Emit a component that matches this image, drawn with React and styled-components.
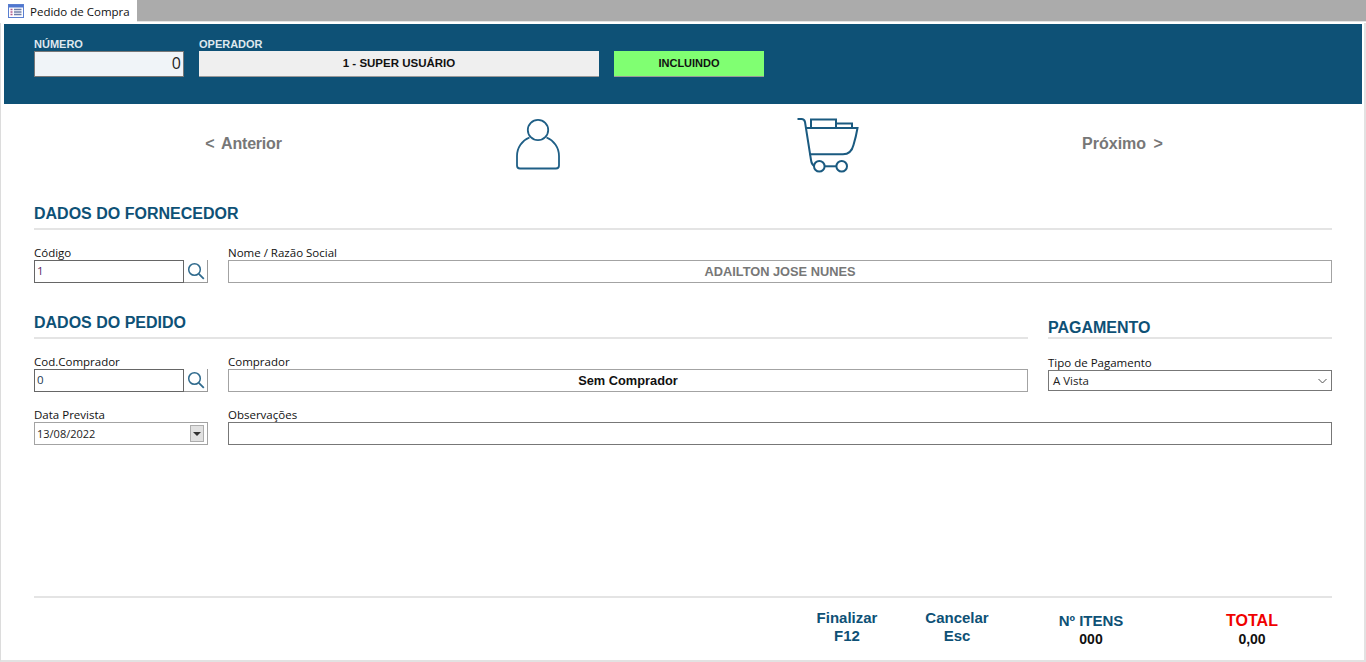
import React from "react";
import styled, { createGlobalStyle } from "styled-components";

const Blue = "#0e5176";

const GlobalStyle = createGlobalStyle`
  html, body {
    margin: 0;
    padding: 0;
    background: #fff;
    overflow: hidden;
  }
  * { box-sizing: border-box; }
`;

const Page = styled.div`
  width: 1366px;
  height: 662px;
  display: flex;
  flex-direction: column;
  background: #fff;
  font-family: "Liberation Sans", Arial, sans-serif;
`;

const TabBar = styled.div`
  height: 22px;
  flex: none;
  background: #ababab;
  border-bottom: 1px solid #e4e4e4;
`;

const Tab = styled.div`
  width: 137px;
  height: 22px;
  background: #fff;
  display: flex;
  align-items: center;
  padding-left: 8px;
  gap: 6px;
  font-family: "Open Sans", sans-serif;
  font-size: 11.5px;
  color: #111;
`;

const Window = styled.div`
  flex: 1;
  display: flex;
  flex-direction: column;
  margin-top: 1px;
  padding: 1px 2px 2px 3px;
  border-left: 1px solid #dcdcdc;
  border-right: 2px solid #e2e2e2;
  border-bottom: 2px solid #e2e2e2;
  min-height: 0;
`;

const Header = styled.div`
  height: 80px;
  flex: none;
  background: ${Blue};
  padding: 13px 30px 0;
  display: flex;
  align-items: flex-start;
  gap: 15px;
`;

const HeaderField = styled.div`
  width: ${(p) => p.$width}px;
  display: flex;
  flex-direction: column;
`;

const HeaderLabel = styled.label`
  height: 14px;
  font-size: 11px;
  font-weight: bold;
  line-height: 14px;
  color: #dfe8ee;
`;

const NumberBox = styled.div`
  height: 26px;
  background: #f0f4f8;
  border: 1px solid #777;
  color: #222;
  font-family: "Open Sans", sans-serif;
  font-size: 16px;
  line-height: 23px;
  text-align: right;
  padding-right: 2px;
`;

const OperatorBox = styled.div`
  height: 26px;
  background: #efefef;
  border-bottom: 1px solid #999;
  color: #111;
  font-size: 11.5px;
  font-weight: bold;
  line-height: 25px;
  text-align: center;
`;

const StatusBox = styled.div`
  width: 150px;
  height: 26px;
  margin-top: 14px;
  background: #80ff72;
  border-bottom: 1px solid #999;
  color: #111;
  font-size: 11px;
  font-weight: bold;
  line-height: 25px;
  text-align: center;
`;

const Steps = styled.div`
  height: 80px;
  flex: none;
  display: grid;
  grid-template-columns: repeat(4, 293px);
  justify-content: center;
  align-items: center;
`;

const Step = styled.div`
  display: flex;
  justify-content: center;
  align-items: center;
  color: #777;
  font-size: 16px;
  font-weight: bold;
  word-spacing: 3px;
  letter-spacing: ${(p) => p.$spacing || 0}px;
`;

const PersonSvg = styled.svg`
  margin-left: 3px;
`;

const CartSvg = styled.svg`
  margin-right: 3px;
  margin-bottom: -4px;
`;

const Form = styled.div`
  flex: 1;
  display: flex;
  flex-direction: column;
  padding: 0 30px;
  min-height: 0;
`;

const SectionTitle = styled.div`
  height: ${(p) => p.$height}px;
  border-bottom: 2px solid #e4e4e4;
  color: ${Blue};
  font-size: 16px;
  font-weight: bold;
  line-height: 19px;
  display: flex;
  align-items: flex-end;
  padding-bottom: ${(p) => p.$pad}px;
`;

const FieldRow = styled.div`
  display: grid;
  grid-template-columns: 174px 1fr;
  column-gap: 20px;
  margin-top: ${(p) => p.$top}px;
`;

const Columns = styled.div`
  display: grid;
  grid-template-columns: 994px 284px;
  column-gap: 20px;
  margin-top: ${(p) => p.$top}px;
`;

const Field = styled.div`
  display: flex;
  flex-direction: column;
  min-width: 0;
  padding-top: ${(p) => p.$top || 0}px;
`;

const Label = styled.label`
  height: 14px;
  font-family: "Open Sans", sans-serif;
  font-size: 11.5px;
  line-height: 13px;
  color: #111;
`;

const Lookup = styled.div`
  display: flex;
  height: 23px;
`;

const CodeBox = styled.div`
  width: 150px;
  height: 23px;
  border: 1px solid #666;
  padding-left: 2px;
  font-family: "Open Sans", sans-serif;
  font-size: 11.5px;
  line-height: 20px;
  color: ${(p) => p.$color};
`;

const SearchButton = styled.div`
  width: 24px;
  height: 23px;
  border-right: 1px solid #999;
  border-bottom: 1px solid #999;
  display: flex;
  align-items: center;
  justify-content: center;
`;

const TextBox = styled.div`
  height: 23px;
  border: 1px solid ${(p) => p.$border || "#a3a3a3"};
  font-size: 12.8px;
  font-weight: bold;
  line-height: 21px;
  text-align: center;
  color: ${(p) => p.$color || "#111"};
`;

const DateBox = styled.div`
  height: 23px;
  border: 1px solid #a3a3a3;
  display: flex;
  align-items: center;
  justify-content: space-between;
  padding: 0 3px 0 2px;
  font-family: "Open Sans", sans-serif;
  font-size: 11px;
  color: #222;
`;

const DateArrow = styled.div`
  width: 14px;
  height: 17px;
  background: #e1e1e1;
  border: 1px solid #adadad;
  display: flex;
  align-items: center;
  justify-content: center;

  &::after {
    content: "";
    border-left: 4px solid transparent;
    border-right: 4px solid transparent;
    border-top: 4px solid #333;
  }
`;

const SelectBox = styled.div`
  height: 21px;
  border: 1px solid #777;
  display: flex;
  align-items: center;
  justify-content: space-between;
  padding: 0 4px 0 4px;
  font-family: "Open Sans", sans-serif;
  font-size: 11.5px;
  color: #222;
`;

const Spacer = styled.div`
  flex: 1;
`;

const Footer = styled.div`
  height: 62px;
  flex: none;
  border-top: 2px solid #e4e4e4;
  display: grid;
  grid-template-columns: 114px 106px 162px 160px;
  justify-content: end;
`;

const FooterCell = styled.div`
  display: flex;
  flex-direction: column;
  align-items: center;
  padding-top: ${(p) => p.$top}px;
  color: ${(p) => p.$color || Blue};
  font-size: ${(p) => p.$size || 15}px;
  line-height: 18px;
  font-weight: bold;
`;

const FooterValue = styled.span`
  color: #111;
  font-size: 14px;
  line-height: 18px;
`;

const SheetIcon = () => (
  <svg width="16" height="14" viewBox="0 0 16 14">
    <rect x="0.5" y="0.5" width="15" height="13" fill="#fdfdff" stroke="#5a7fd0" />
    <rect x="1" y="1" width="14" height="2.5" fill="#4f76cf" />
    <path d="M2.5 5.5h2M2.5 8h2M2.5 10.5h2" stroke="#b05a8c" strokeWidth="1.3" />
    <path d="M6 5.5h7.5M6 8h7.5M6 10.5h7.5" stroke="#6d7ea8" strokeWidth="1.3" />
  </svg>
);

const SearchIcon = () => (
  <svg width="18" height="18" viewBox="0 0 18 18" fill="none" stroke="#2f6a8d">
    <circle cx="7.5" cy="7.5" r="5.8" strokeWidth="1.5" />
    <path d="M11.8 11.8l5 5" strokeWidth="1.8" />
  </svg>
);

const PersonIcon = () => (
  <PersonSvg width="46" height="54" viewBox="0 0 46 54" fill="none" stroke="#1f5f86" strokeWidth="1.8">
    <circle cx="23" cy="13" r="10.2" />
    <path d="M14.5 20.500C7 23.500 2 30.500 2 39v9.500c0 2 1 3 3 3h36c2 0 3-1 3-3V39c0-8.500-5-15.500-12.500-18.500" />
  </PersonSvg>
);

const CartIcon = () => (
  <CartSvg width="62" height="56" viewBox="0 0 62 56" fill="none" stroke="#1a5a80" strokeWidth="2">
    <path d="M.5 1h4c2 0 3 .8 3.500 3L14 42c.4 3 1.500 5 3.500 6" />
    <path d="M9 10h51.500c-1 6-2.500 12-4 17-1.500 6-5 9.300-10.500 9.300H12.500" />
    <path d="M14 9.500V1.500h25v8M39 5.500h16v4" />
    <circle cx="22.300" cy="48.300" r="5.300" />
    <circle cx="44.700" cy="48.300" r="5.300" />
    <path d="M27.600 48.300h11.800" />
  </CartSvg>
);

const ChevronIcon = () => (
  <svg width="9" height="6" viewBox="0 0 9 6" fill="none" stroke="#555" strokeWidth="1">
    <path d="M.5 1l4 4 4-4" />
  </svg>
);

export default function App() {
  return (
    <Page>
      <GlobalStyle />
      <TabBar>
        <Tab>
          <SheetIcon />
          Pedido de Compra
        </Tab>
      </TabBar>
      <Window>
        <Header>
          <HeaderField $width={150}>
            <HeaderLabel>NÚMERO</HeaderLabel>
            <NumberBox>0</NumberBox>
          </HeaderField>
          <HeaderField $width={400}>
            <HeaderLabel>OPERADOR</HeaderLabel>
            <OperatorBox>1 - SUPER USUÁRIO</OperatorBox>
          </HeaderField>
          <StatusBox>INCLUINDO</StatusBox>
        </Header>
        <Steps>
          <Step $spacing={-0.2}>&lt; Anterior</Step>
          <Step><PersonIcon /></Step>
          <Step><CartIcon /></Step>
          <Step>Próximo &gt;</Step>
        </Steps>
        <Form>
          <SectionTitle $height={46} $pad={5}>DADOS DO FORNECEDOR</SectionTitle>
          <FieldRow $top={16}>
            <Field>
              <Label>Código</Label>
              <Lookup>
                <CodeBox $color="#5a2a6a">1</CodeBox>
                <SearchButton><SearchIcon /></SearchButton>
              </Lookup>
            </Field>
            <Field>
              <Label>Nome / Razão Social</Label>
              <TextBox $color="#777">ADAILTON JOSE NUNES</TextBox>
            </Field>
          </FieldRow>
          <Columns $top={14}>
            <SectionTitle $height={42} $pad={5}>DADOS DO PEDIDO</SectionTitle>
            <SectionTitle $height={42} $pad={0}>PAGAMENTO</SectionTitle>
          </Columns>
          <Columns $top={16}>
            <FieldRow $top={0}>
              <Field>
                <Label>Cod.Comprador</Label>
                <Lookup>
                  <CodeBox $color="#1c3a50">0</CodeBox>
                  <SearchButton><SearchIcon /></SearchButton>
                </Lookup>
              </Field>
              <Field>
                <Label>Comprador</Label>
                <TextBox>Sem Comprador</TextBox>
              </Field>
            </FieldRow>
            <Field $top={1}>
              <Label>Tipo de Pagamento</Label>
              <SelectBox>
                A Vista
                <ChevronIcon />
              </SelectBox>
            </Field>
          </Columns>
          <FieldRow $top={16}>
            <Field>
              <Label>Data Prevista</Label>
              <DateBox>
                13/08/2022
                <DateArrow />
              </DateBox>
            </Field>
            <Field>
              <Label>Observações</Label>
              <TextBox $border="#777" />
            </Field>
          </FieldRow>
          <Spacer />
          <Footer>
            <FooterCell $top={11}>
              Finalizar
              <span>F12</span>
            </FooterCell>
            <FooterCell $top={11}>
              Cancelar
              <span>Esc</span>
            </FooterCell>
            <FooterCell $top={14}>
              Nº ITENS
              <FooterValue>000</FooterValue>
            </FooterCell>
            <FooterCell $top={14} $color="#f00000" $size={16}>
              TOTAL
              <FooterValue>0,00</FooterValue>
            </FooterCell>
          </Footer>
        </Form>
      </Window>
    </Page>
  );
}
